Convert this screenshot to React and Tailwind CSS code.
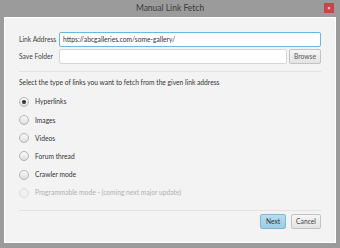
import React from "react";

function Radio({ label, checked, disabled }) {
  return (
    <div className="flex items-center h-[18.2px]">
      <div
        className={`w-[10px] h-[10px] rounded-full border flex items-center justify-center ${
          disabled
            ? "border-[#dcdcdc] bg-[#f0f0f0]"
            : "border-[#b5b5b5] bg-gradient-to-b from-[#fafafa] to-[#dedede]"
        }`}
      >
        {checked && <div className="w-[4px] h-[4px] rounded-full bg-[#333]" />}
      </div>
      <span className={`ml-[6px] ${disabled ? "text-[#b0b0b0]" : "text-[#333]"}`}>{label}</span>
    </div>
  );
}

export default function App() {
  return (
    <div
      className="w-[340px] h-[248px] bg-[#9b9b9b] flex flex-col text-[6.7px] leading-none"
      style={{ fontFamily: 'Lato, "Open Sans", sans-serif' }}
    >
      <div className="h-[17px] flex items-center relative">
        <div className="flex-1 text-center text-[8.5px] text-[#3a3a3a]">Manual Link Fetch</div>
        <div className="absolute right-[6px] top-[3px] w-[10px] h-[10px] bg-[#c9444a] flex items-center justify-center text-white text-[5px] font-bold">
          ×
        </div>
      </div>
      <div className="mx-[4px] h-[226px] bg-[#f3f3f3] border border-white px-[14px] pt-[14px] flex flex-col">
        <div className="flex items-center h-[15px]">
          <span className="w-[40px] text-[#444]">Link Address</span>
          <div className="flex-1 h-[15px] border border-[#67b9e0] bg-white rounded-[2px] flex items-center px-[3px] text-[#333]">
            https://abcgalleries.com/some-gallery/
          </div>
        </div>
        <div className="flex items-center h-[15px] mt-[2px]">
          <span className="w-[40px] text-[#444]">Save Folder</span>
          <div className="flex-1 h-[15px] border border-[#d6d6d6] bg-white rounded-[2px]" />
          <div className="ml-[2px] w-[32px] h-[15px] border border-[#c3c3c3] rounded-[2px] bg-gradient-to-b from-[#f6f6f6] to-[#e3e3e3] flex items-center justify-center text-[#555]">
            Browse
          </div>
        </div>
        <div className="h-px bg-[#e2e2e2] mt-[7px]" />
        <div className="mt-[7px] text-[#333]">Select the type of links you want to fetch from the given link address</div>
        <div className="mt-[7px] flex flex-col">
          <Radio label="Hyperlinks" checked />
          <Radio label="Images" />
          <Radio label="Videos" />
          <Radio label="Forum thread" />
          <Radio label="Crawler mode" />
          <Radio label="Programmable mode - (coming next major update)" disabled />
        </div>
        <div className="h-px bg-[#e2e2e2] mt-[8px]" />
        <div className="flex justify-end mt-[3px] gap-[5px]">
          <div className="w-[26px] h-[15px] border border-[#7fb8d6] rounded-[2px] bg-gradient-to-b from-[#b9dcef] to-[#9ccbe6] flex items-center justify-center text-[#333]">
            Next
          </div>
          <div className="w-[30px] h-[15px] border border-[#c3c3c3] rounded-[2px] bg-gradient-to-b from-[#f6f6f6] to-[#e3e3e3] flex items-center justify-center text-[#444]">
            Cancel
          </div>
        </div>
      </div>
    </div>
  );
}
